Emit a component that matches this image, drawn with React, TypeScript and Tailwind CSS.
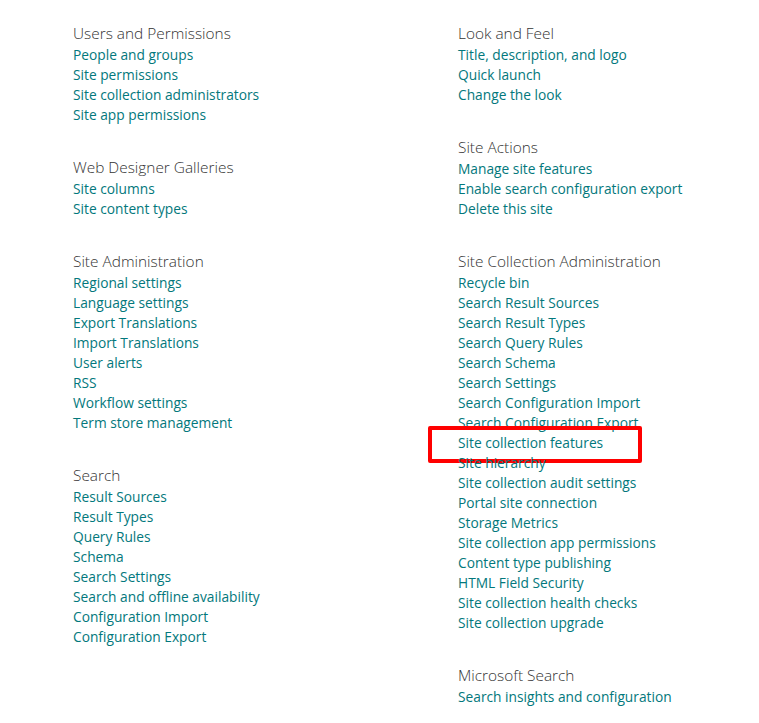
import React from "react";

type Section = { title: string; links: string[] };

const left: Section[] = [
  {
    title: "Users and Permissions",
    links: ["People and groups", "Site permissions", "Site collection administrators", "Site app permissions"],
  },
  { title: "Web Designer Galleries", links: ["Site columns", "Site content types"] },
  {
    title: "Site Administration",
    links: [
      "Regional settings",
      "Language settings",
      "Export Translations",
      "Import Translations",
      "User alerts",
      "RSS",
      "Workflow settings",
      "Term store management",
    ],
  },
  {
    title: "Search",
    links: [
      "Result Sources",
      "Result Types",
      "Query Rules",
      "Schema",
      "Search Settings",
      "Search and offline availability",
      "Configuration Import",
      "Configuration Export",
    ],
  },
];

const right: Section[] = [
  { title: "Look and Feel", links: ["Title, description, and logo", "Quick launch", "Change the look"] },
  { title: "Site Actions", links: ["Manage site features", "Enable search configuration export", "Delete this site"] },
  {
    title: "Site Collection Administration",
    links: [
      "Recycle bin",
      "Search Result Sources",
      "Search Result Types",
      "Search Query Rules",
      "Search Schema",
      "Search Settings",
      "Search Configuration Import",
      "Search Configuration Export",
      "Site collection features",
      "Site hierarchy",
      "Site collection audit settings",
      "Portal site connection",
      "Storage Metrics",
      "Site collection app permissions",
      "Content type publishing",
      "HTML Field Security",
      "Site collection health checks",
      "Site collection upgrade",
    ],
  },
  { title: "Microsoft Search", links: ["Search insights and configuration"] },
];

function Column({ sections }: { sections: Section[] }) {
  return (
    <div className="flex flex-col gap-[32px]">
      {sections.map((s) => (
        <div key={s.title} className="flex flex-col">
          <div className="text-[15.4px] leading-[22px] font-light text-[#333333]">{s.title}</div>
          <ul className="flex flex-col">
            {s.links.map((l) => (
              <li key={l} className="relative text-[13.75px] leading-[20px] text-[#03787c]">
                <a href="#" className="whitespace-nowrap">{l}</a>
                {l === "Site collection features" && (
                  <span className="pointer-events-none absolute left-[-30px] top-[-7px] h-[37px] w-[214px] rounded-[2px] border-[4px] border-[#ff0000]" />
                )}
              </li>
            ))}
          </ul>
        </div>
      ))}
    </div>
  );
}

export default function App() {
  return (
    <div
      className="h-[723px] w-[759px] overflow-hidden bg-white pl-[73px] pt-[23px]"
      style={{ fontFamily: '"Open Sans", "Noto Sans", sans-serif' }}
    >
      <div className="grid grid-cols-[385px_1fr]">
        <Column sections={left} />
        <Column sections={right} />
      </div>
    </div>
  );
}
